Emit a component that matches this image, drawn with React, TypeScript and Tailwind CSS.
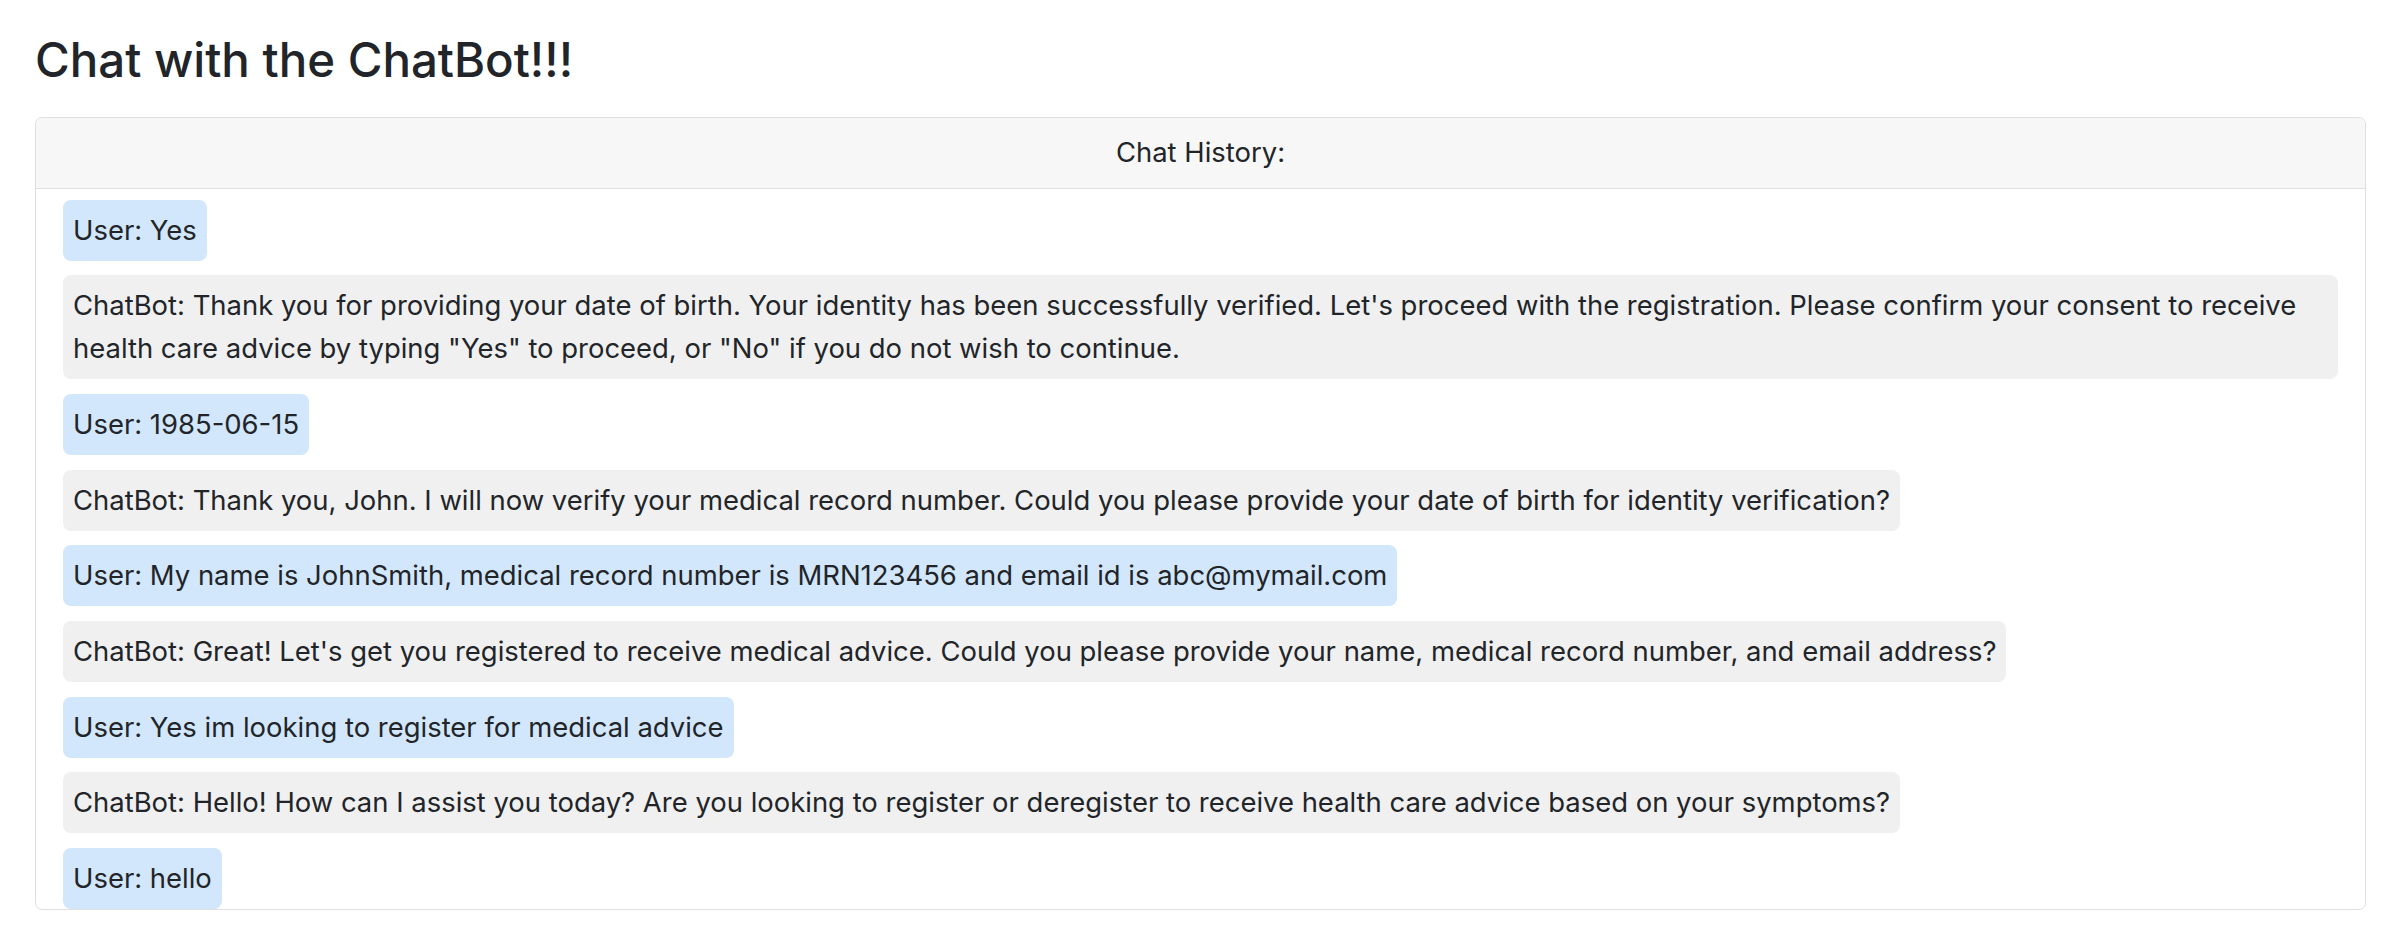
import React from "react";

type Message = { from: "user" | "bot"; text: string };

const messages: Message[] = [
  { from: "user", text: "User: Yes" },
  {
    from: "bot",
    text: 'ChatBot: Thank you for providing your date of birth. Your identity has been successfully verified. Let\'s proceed with the registration. Please confirm your consent to receive health care advice by typing "Yes" to proceed, or "No" if you do not wish to continue.',
  },
  { from: "user", text: "User: 1985-06-15" },
  {
    from: "bot",
    text: "ChatBot: Thank you, John. I will now verify your medical record number. Could you please provide your date of birth for identity verification?",
  },
  {
    from: "user",
    text: "User: My name is JohnSmith, medical record number is MRN123456 and email id is abc@mymail.com",
  },
  {
    from: "bot",
    text: "ChatBot: Great! Let's get you registered to receive medical advice. Could you please provide your name, medical record number, and email address?",
  },
  { from: "user", text: "User: Yes im looking to register for medical advice" },
  {
    from: "bot",
    text: "ChatBot: Hello! How can I assist you today? Are you looking to register or deregister to receive health care advice based on your symptoms?",
  },
  { from: "user", text: "User: hello" },
];

function Bubble({ message }: { message: Message }) {
  return (
    <div
      className={
        message.from === "user"
          ? "shrink-0 rounded-[8px] bg-[#d3e7fc] px-[10px] py-[9px] leading-[43px]"
          : "shrink-0 rounded-[8px] bg-[#f0f0f0] px-[10px] py-[9px] leading-[43px]"
      }
    >
      {message.text}
    </div>
  );
}

export default function App() {
  return (
    <div className="min-h-screen bg-white pl-[35px] pr-[22px] pt-[31px] font-['Inter','Noto_Sans',sans-serif] text-[#212529]">
      <h2 className="mb-[28px] text-[47.4px] font-medium leading-[1.215]">Chat with the ChatBot!!!</h2>

      <div className="overflow-hidden rounded-[7px] border border-[#dfdfdf]">
        {/* header */}
        <div className="flex h-[71px] items-center justify-center border-b border-[#dfdfdf] bg-[#f7f7f7] text-[27.45px]">
          Chat History:
        </div>

        {/* history, newest first */}
        <div className="flex h-[720px] flex-col items-start gap-[14.7px] overflow-hidden px-[27px] pt-[11px] text-[27.45px]">
          {messages.map((m, i) => (
            <Bubble key={i} message={m} />
          ))}
        </div>
      </div>
    </div>
  );
}
